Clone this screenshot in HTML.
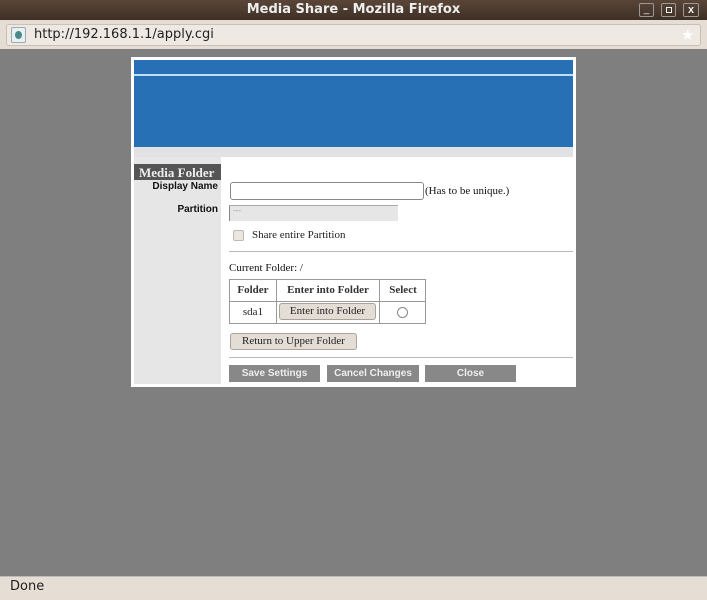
<!DOCTYPE html>
<html><head><style>
*{margin:0;padding:0;box-sizing:border-box}
body{width:707px;height:600px;overflow:hidden;background:#7f7f7f;font-family:"Liberation Sans",sans-serif;position:relative}
.a{position:absolute}
.serif{font-family:"Liberation Serif",serif}
.btn{position:absolute;background:#e4ddd6;border:1px solid #a9a39c;border-radius:3px;font-family:"Liberation Serif",serif;font-size:11px;text-align:center;color:#222}
.gb{position:absolute;top:365px;height:17px;background:#888;color:#eee;font-weight:bold;font-size:10px;text-align:center;line-height:17px}
</style></head><body>
<div class="a" style="left:0;top:0;width:707px;height:20px;background:linear-gradient(#5a4638,#3e2f25);"></div>
<div class="a" style="left:0;top:2px;width:707px;text-align:center;color:#eee;font-weight:bold;font-size:13px;font-family:'DejaVu Sans',sans-serif">Media Share - Mozilla Firefox</div>
<div class="a" style="left:639px;top:3px;width:15px;height:14px;border:1px solid #999;border-radius:2px;color:#eee;font-size:10px;text-align:center;line-height:12px">_</div>
<div class="a" style="left:661px;top:3px;width:15px;height:14px;border:1px solid #999;border-radius:2px"></div>
<div class="a" style="left:666px;top:7px;width:6px;height:6px;border:1px solid #eee"></div>
<div class="a" style="left:683px;top:3px;width:16px;height:14px;border:1px solid #999;border-radius:2px;color:#eee;font-size:11px;text-align:center;line-height:13px;font-weight:bold">x</div>
<div class="a" style="left:0;top:20px;width:707px;height:29px;background:#e6ded4"></div>
<div class="a" style="left:6px;top:24px;width:695px;height:22px;background:#eee9e2;border:1px solid #c9c1b6;border-radius:3px"></div>
<div class="a" style="left:11px;top:27px;width:15px;height:16px;border:1px solid #9ab;background:#e8f0f0;border-radius:2px"></div>
<div class="a" style="left:15px;top:31px;width:7px;height:8px;border-radius:50%;background:#4a8a8a"></div>
<div class="a" style="left:34px;top:27px;font-size:13px;color:#222;font-family:'DejaVu Sans',sans-serif">http://192.168.1.1/apply.cgi</div>
<div class="a" style="left:681px;top:26px;color:#fff;font-size:15px">★</div>
<div class="a" style="left:131px;top:57px;width:445px;height:330px;background:#fff"></div>
<div class="a" style="left:134px;top:60px;width:439px;height:87px;background:#2870b6"></div>
<div class="a" style="left:134px;top:74px;width:439px;height:2px;background:#bde0f5"></div>
<div class="a" style="left:134px;top:147px;width:439px;height:10px;background:#e2e2e4"></div>
<div class="a" style="left:134px;top:157px;width:87px;height:227px;background:#e6e6e6"></div>
<div class="a serif" style="left:134px;top:164px;width:87px;height:16px;background:#555;color:#eee;font-weight:bold;font-size:13px;line-height:17px;padding-left:5px">Media Folder</div>
<div class="a" style="left:134px;top:181px;width:84px;text-align:right;font-size:10px;font-weight:bold;color:#111">Display Name</div>
<div class="a" style="left:134px;top:204px;width:84px;text-align:right;font-size:10px;font-weight:bold;color:#111">Partition</div>
<div class="a" style="left:230px;top:182px;width:194px;height:18px;border:1px solid #888;border-radius:3px;background:#fff"></div>
<div class="a serif" style="left:425px;top:185px;font-size:11px;color:#111">(Has to be unique.)</div>
<div class="a" style="left:229px;top:205px;width:169px;height:16px;background:#e6e6e6;border-left:1px solid #888;border-top:1px solid #aaa;color:#999;font-size:8px;padding-left:3px">---</div>
<div class="a" style="left:233px;top:230px;width:11px;height:11px;border:1px solid #bbb;border-radius:2px;background:#ece6df"></div>
<div class="a serif" style="left:252px;top:229px;font-size:11px;color:#222">Share entire Partition</div>
<div class="a" style="left:229px;top:251px;width:344px;height:1px;background:#bbb"></div>
<div class="a serif" style="left:229px;top:262px;font-size:11px;color:#111">Current Folder: /</div>
<div class="a" style="left:229px;top:279px;width:197px;height:45px;border:1px solid #999"></div>
<div class="a" style="left:229px;top:301px;width:197px;height:1px;background:#999"></div>
<div class="a" style="left:276px;top:279px;width:1px;height:45px;background:#999"></div>
<div class="a" style="left:379px;top:279px;width:1px;height:45px;background:#999"></div>
<div class="a serif" style="left:230px;top:284px;width:46px;text-align:center;font-size:11px;font-weight:bold;color:#333">Folder</div>
<div class="a serif" style="left:277px;top:284px;width:102px;text-align:center;font-size:11px;font-weight:bold;color:#333">Enter into Folder</div>
<div class="a serif" style="left:380px;top:284px;width:46px;text-align:center;font-size:11px;font-weight:bold;color:#333">Select</div>
<div class="a serif" style="left:230px;top:306px;width:46px;text-align:center;font-size:11px;color:#222">sda1</div>
<div class="btn" style="left:279px;top:303px;width:97px;height:17px;line-height:15px">Enter into Folder</div>
<div class="a" style="left:397px;top:307px;width:11px;height:11px;border:1px solid #888;border-radius:50%;background:#fff"></div>
<div class="btn" style="left:230px;top:333px;width:127px;height:17px;line-height:15px">Return to Upper Folder</div>
<div class="a" style="left:229px;top:357px;width:344px;height:1px;background:#bbb"></div>
<div class="gb" style="left:229px;width:91px">Save Settings</div>
<div class="gb" style="left:327px;width:92px">Cancel Changes</div>
<div class="gb" style="left:425px;width:91px">Close</div>
<div class="a" style="left:0;top:576px;width:707px;height:24px;background:#e6ded4;border-top:1px solid #bbb"></div>
<div class="a" style="left:10px;top:579px;font-size:13px;color:#222;font-family:'DejaVu Sans',sans-serif">Done</div>
</body></html>
